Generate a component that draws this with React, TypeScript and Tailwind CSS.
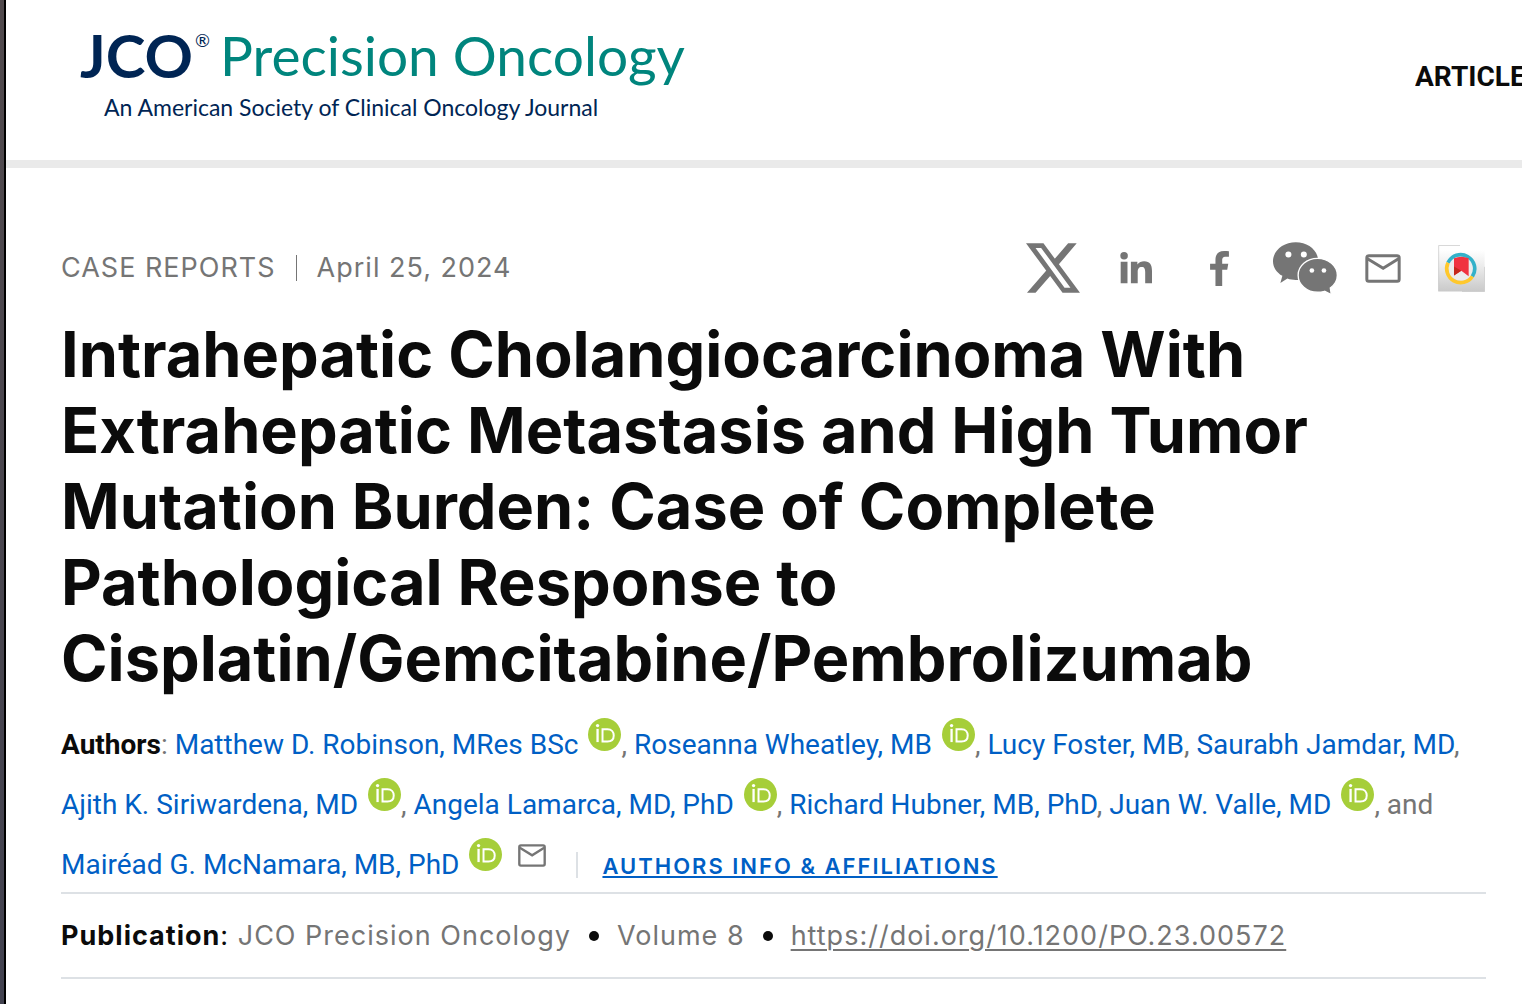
import type { ReactNode } from "react";

type Author = { name: string; orcid?: boolean };

const authors: Author[] = [
  { name: "Matthew D. Robinson, MRes BSc", orcid: true },
  { name: "Roseanna Wheatley, MB", orcid: true },
  { name: "Lucy Foster, MB" },
  { name: "Saurabh Jamdar, MD" },
  { name: "Ajith K. Siriwardena, MD", orcid: true },
  { name: "Angela Lamarca, MD, PhD", orcid: true },
  { name: "Richard Hubner, MB, PhD" },
  { name: "Juan W. Valle, MD", orcid: true },
];

function XIcon() {
  return (
    <svg viewBox="76 66 164 150" className="h-[50px] w-[54px]" fill="currentColor">
      <path
        fillRule="evenodd"
        d="M76 66h53l111 150h-53zM105 80l88 121h18l-89-121z"
      />
      <path d="M204 66h26l-56 66-14-15zM79 216h26l47-54-13-15z" />
    </svg>
  );
}

function LinkedInIcon() {
  return (
    <svg viewBox="359 94 94 94" className="size-8" fill="currentColor">
      <circle cx="371" cy="105" r="11" />
      <path d="M361 123h20v63h-20zM391 123h19v8c5-7 12-10 20-10 17 0 23 10 23 29v36h-20v-33c0-9-2-15-10-15-9 0-12 6-12 15v33h-20z" />
    </svg>
  );
}

function FacebookIcon() {
  return (
    <svg viewBox="629 88 56 104" className="h-[35px] w-[19px]" fill="currentColor">
      <path d="M645 192v-48h-16v-18h16v-12c0-17 9-26 26-26 5 0 10 0 14 1v16h-9c-9 0-11 4-11 11v10h18l-3 18h-15v48z" />
    </svg>
  );
}

function WeChatIcon() {
  return (
    <svg viewBox="71 64 191 155" className="h-[52px] w-16" fill="currentColor">
      <path d="M139 65c37 0 67 25 67 56s-30 56-67 56c-9 0-17-1-25-4l-21 13 6-21c-17-10-28-26-28-44 0-31 31-56 68-56z" />
      <path
        stroke="white"
        strokeWidth="4"
        d="M204 113c32 0 59 22 59 50 0 16-8 29-21 38l3 20-20-10c-7 2-14 3-21 3-32 0-58-23-58-51s26-50 58-50z"
      />
      <g fill="white">
        <circle cx="117" cy="101" r="9" />
        <circle cx="163" cy="101" r="9" />
        <circle cx="187" cy="149" r="7" />
        <circle cx="223" cy="149" r="7" />
      </g>
    </svg>
  );
}

function MailIcon({ className }: { className: string }) {
  return (
    <svg viewBox="347 97 107 87" className={className} fill="none" stroke="currentColor" strokeWidth="9">
      <rect x="352" y="102" width="97" height="77" rx="6" />
      <path d="M354 111l47 29 46-29" />
    </svg>
  );
}

function CrossmarkIcon() {
  return (
    <svg viewBox="564 78 141 140" className="size-[47px]">
      <defs>
        <linearGradient id="page" x1="0" y1="0" x2="0" y2="1">
          <stop offset="0.1" stopColor="#ffffff" />
          <stop offset="0.5" stopColor="#e9e9e9" />
          <stop offset="1" stopColor="#c9c9c9" />
        </linearGradient>
      </defs>
      <path d="M565 79h139v138H565z" fill="url(#page)" />
      <path d="M630 79h-64v137M704 143v74h-68" fill="none" stroke="#c4c4c4" strokeWidth="2" />
      <circle cx="633" cy="147" r="38" fill="#ececec" />
      <path d="M594 131a42 42 0 1 1 73 41" fill="none" stroke="#33b1c9" strokeWidth="11" />
      <path d="M594 131a42 42 0 0 0 73 41" fill="none" stroke="#ffc82c" strokeWidth="11" />
      <path d="M612 117q22-9 44 0v54l-22-16-22 14z" fill="#f03340" />
      <path d="M612 142l22 13-22 14z" fill="#c5281c" />
    </svg>
  );
}

function OrcidIcon() {
  return (
    <svg viewBox="0 0 100 100" className="ml-2.5 inline size-[33px] align-[3px]">
      <circle cx="50" cy="50" r="50" fill="#a6ce39" />
      <g fill="none" stroke="white" strokeWidth="6">
        <path d="M29 33v40" strokeWidth="7" />
        <path d="M44 34h15c13 0 19 9 19 19s-6 18-19 18H44z" />
      </g>
      <circle cx="29" cy="23" r="5" fill="white" />
    </svg>
  );
}

function Share({ label, className, children }: { label: string; className: string; children: ReactNode }) {
  return (
    <a href="#share" aria-label={label} className={`flex shrink-0 items-center justify-center ${className}`}>
      {children}
    </a>
  );
}

export default function App() {
  return (
    <div className="flex min-h-screen overflow-hidden bg-white">
      <div className="w-1.5 shrink-0 border-r-2 border-black bg-linear-to-b from-[#514a4d] to-[#424250]" />

      <div className="min-w-0 flex-1">
        {/* HEADER */}
        <header className="flex h-[168px] items-start justify-between border-b-8 border-[#eaeaea] pl-[74px] pt-5">
          <a href="#home" className="whitespace-nowrap font-[Lato] text-[#002554]">
            <span className="flex items-start leading-[70px]">
              <b className="text-[60px] font-bold">JCO</b>
              <span className="ml-0.5 mt-2 text-[18px] leading-6">®</span>
              <span className="ml-2.5 text-[55px] text-[#00857d]">Precision Oncology</span>
            </span>
            <span className="block pl-6 text-[23px] leading-[34px]">
              An American Society of Clinical Oncology Journal
            </span>
          </a>
          <nav className="mt-10 w-[107px] shrink-0 overflow-hidden">
            <a href="#articles" className="block font-[Roboto] text-[28px] leading-[34px] font-bold text-[#0b0b0b]">
              ARTICLE
            </a>
          </nav>
        </header>

        <main className="pl-[55px] pr-9 pt-[68px] text-[#757575]">
          {/* META + SHARE */}
          <div className="flex h-16 items-center justify-between">
            <div className="flex items-center font-[Inter] text-[27px] leading-8 tracking-[1px]">
              <span>CASE REPORTS</span>
              <span className="mx-5 h-[26px] w-px bg-[#757575]" />
              <time dateTime="2024-04-25">April 25, 2024</time>
            </div>
            <div className="flex items-center pr-px">
              <Share label="X" className="mr-3.5"><XIcon /></Share>
              <Share label="LinkedIn" className="w-[84px]"><LinkedInIcon /></Share>
              <Share label="Facebook" className="w-[82px]"><FacebookIcon /></Share>
              <Share label="WeChat" className="w-[90px]"><WeChatIcon /></Share>
              <Share label="Email" className="w-[66px]"><MailIcon className="h-[29px] w-9" /></Share>
              <Share label="Crossmark" className="ml-[22px]"><CrossmarkIcon /></Share>
            </div>
          </div>

          <h1 className="mt-4 max-w-[1300px] font-[Inter] text-[63px] leading-[76px] font-bold text-[#0b0b0b]">
            Intrahepatic Cholangiocarcinoma With Extrahepatic Metastasis and High Tumor Mutation
            Burden: Case of Complete Pathological Response to Cisplatin/Gemcitabine/Pembrolizumab
          </h1>

          {/* AUTHORS */}
          <p className="mt-[19px] font-[Roboto] text-[28px] leading-[60px]">
            <b className="font-bold text-[#0b0b0b]">Authors</b>:{" "}
            {authors.map((author) => (
              <span key={author.name}>
                <a href="#author" className="text-[#005fc5]">{author.name}</a>
                {author.orcid && <OrcidIcon />}
                {", "}
              </span>
            ))}
            and{" "}
            <a href="#author" className="text-[#005fc5]">Mairéad G. McNamara, MB, PhD</a>
            <OrcidIcon />
            <MailIcon className="ml-4 inline h-[23px] w-7 align-[7px]" />
            <span className="mr-6 ml-[30px] inline-block h-[26px] w-0.5 bg-[#dde1e5] align-[-4px]" />
            <a
              href="#affiliations"
              className="font-[Inter] text-[22px] leading-8 font-semibold tracking-[2px] text-[#005fc5] underline decoration-2 underline-offset-2 [text-decoration-skip-ink:none]"
            >
              AUTHORS INFO &amp; AFFILIATIONS
            </a>
          </p>

          {/* PUBLICATION */}
          <div className="-mt-[3px] flex h-[87px] items-center border-y-2 border-[#dde1e5] font-[Inter] text-[27px] leading-8 tracking-[1px]">
            <span>
              <span className="text-[#0b0b0b]"><b className="font-bold">Publication</b>:</span>{" "}
              JCO Precision Oncology
            </span>
            <span className="mx-[18px] size-2.5 rounded-full bg-[#0b0b0b]" />
            <span>Volume 8</span>
            <span className="mx-[18px] size-2.5 rounded-full bg-[#0b0b0b]" />
            <a href="#doi" className="underline decoration-2 underline-offset-4">
              https://doi.org/10.1200/PO.23.00572
            </a>
          </div>
        </main>
      </div>
    </div>
  );
}
